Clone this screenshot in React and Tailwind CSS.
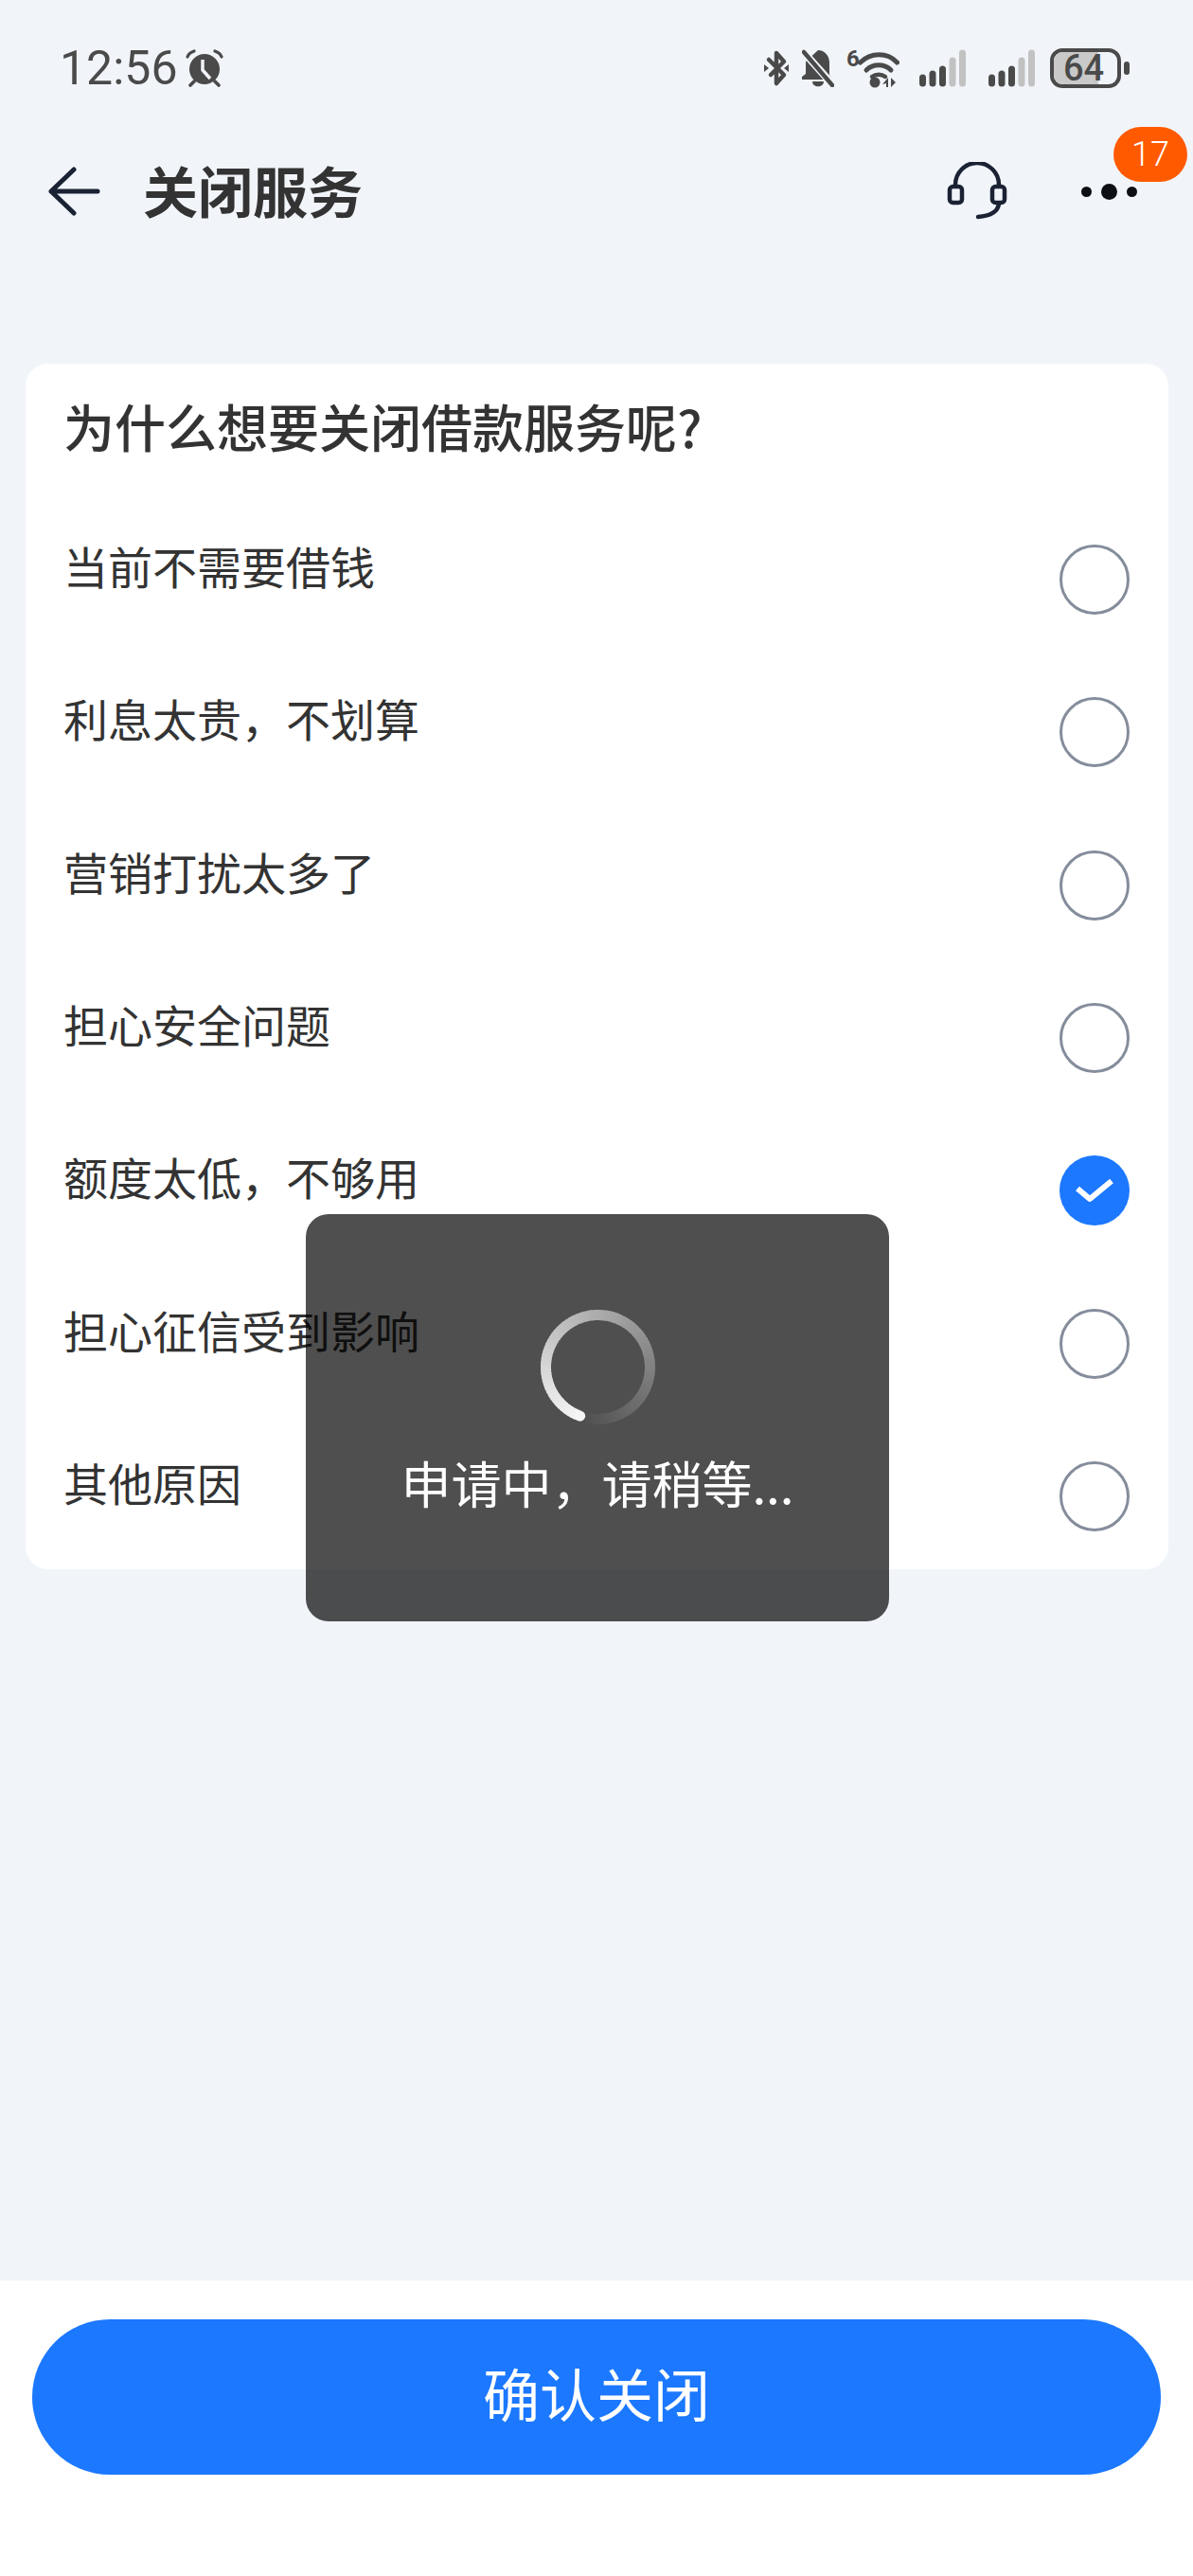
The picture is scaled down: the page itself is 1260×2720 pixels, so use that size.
const cjk = { fontFamily: '"Noto Sans CJK SC", "Noto Sans", sans-serif' };
const reasons = ['当前不需要借钱', '利息太贵，不划算', '营销打扰太多了', '担心安全问题', '额度太低，不够用', '担心征信受到影响', '其他原因'];
const selected = 4;

function AlarmIcon() {
  return (
    <svg width="40" height="40" viewBox="0 0 40 40" fill="none" className="ml-[8px]">
      <circle cx="20" cy="21" r="16" fill="#4a4a4a" />
      <path d="M18 11v11l8 9" stroke="#f1f5fa" strokeWidth="3.5" strokeLinejoin="round" />
      <path d="M2 8c1-3 4-5 7-6M38 8c-1-3-4-5-7-6" stroke="#4a4a4a" strokeWidth="3.2" strokeLinecap="round" />
      <path d="M9 34l-4 4M31 34l4 4" stroke="#4a4a4a" strokeWidth="3.6" strokeLinecap="round" />
    </svg>
  );
}

function BluetoothIcon() {
  return (
    <svg width="28" height="40" viewBox="0 0 28 40" fill="none">
      <path d="M14 36V4l8 9L8 27M14 36l8-9L6 11" stroke="#4a4a4a" strokeWidth="4.5" strokeLinejoin="round" strokeLinecap="round" />
      <path d="M1 16l5 4-5 4zM27 16l-5 4 5 4z" fill="#4a4a4a" />
    </svg>
  );
}

function BellOffIcon() {
  return (
    <svg width="34" height="40" viewBox="0 0 34 40" fill="none">
      <path d="M17 1c7 0 12 6 12 13v13l3 5H0v-3l4-3V13L17 1z" fill="#4a4a4a" />
      <path d="M11 34c0 7 12 7 12 0z" fill="#4a4a4a" />
      <path d="M-1 0l34 38" stroke="#f1f5fa" strokeWidth="8" />
      <path d="M2 3l30 35" stroke="#4a4a4a" strokeWidth="4.5" strokeLinecap="round" />
    </svg>
  );
}

function WifiIcon() {
  return (
    <div className="flex items-start">
      <span className="text-[24px] font-bold leading-[20px] text-[#4a4a4a] w-[12px]" style={{ fontFamily: 'Roboto, sans-serif' }}>6</span>
      <svg width="44" height="41" viewBox="0 0 44 41" fill="none">
        <path d="M2.5 14c11-11 29-11 39 0" stroke="#4a4a4a" strokeWidth="5" strokeLinecap="round" />
        <path d="M9 22c7-7 19-7 26 0" stroke="#4a4a4a" strokeWidth="5" strokeLinecap="round" />
        <path d="M15 29c4-3 10-3 14 0" stroke="#4a4a4a" strokeWidth="4.5" strokeLinecap="round" />
        <circle cx="18" cy="35" r="5.5" fill="#4a4a4a" />
        <path d="M32 30v10h-2v-4l-4 1zM35 30l5 5-5 5z" fill="#4a4a4a" />
      </svg>
    </div>
  );
}

function SignalIcon() {
  const bars = [
    { x: 0, h: 13, c: '#4a4a4a' },
    { x: 10.5, h: 17, c: '#4a4a4a' },
    { x: 21, h: 22, c: '#4a4a4a' },
    { x: 31.5, h: 31, c: '#c2c2c2' },
    { x: 42, h: 39, c: '#c2c2c2' },
  ];
  return (
    <svg width="49" height="40" viewBox="0 0 49 40">
      {bars.map((b) => (
        <rect key={b.x} x={b.x} y={39.5 - b.h} width="7" height={b.h} rx="3.5" fill={b.c} />
      ))}
    </svg>
  );
}

function Battery() {
  return (
    <div className="flex items-center ml-[16px]">
      <div className="relative w-[75px] h-[42px] rounded-[13px] border-[4px] border-[#4a4a4a] flex items-center justify-center">
        <div className="absolute left-0 top-0 bottom-0 w-[47px] rounded-l-[9px] bg-[#c9c9c9]" />
        <span className="relative text-[38px] font-medium leading-[34px] text-[#4a4a4a] pr-[4px]" style={{ fontFamily: 'Roboto, sans-serif' }}>64</span>
      </div>
      <div className="ml-[3px] w-[6px] h-[14px] rounded-full bg-[#4a4a4a]" />
    </div>
  );
}

function StatusBar() {
  return (
    <div className="h-[134px] pt-[51px] pl-[63px] pr-[67px] flex items-start justify-between">
      <div className="flex items-center h-[42px]">
        <span className="text-[50px] leading-none text-[#4a4a4a]" style={{ fontFamily: 'Roboto, sans-serif' }}>12:56</span>
        <AlarmIcon />
      </div>
      <div className="flex items-center h-[42px]">
        <BluetoothIcon />
        <div className="w-[13px]" />
        <BellOffIcon />
        <div className="w-[13px]" />
        <WifiIcon />
        <div className="w-[21px]" />
        <SignalIcon />
        <div className="w-[24px]" />
        <SignalIcon />
        <Battery />
      </div>
    </div>
  );
}

function Header() {
  return (
    <div className="relative h-[136px] flex items-center pl-[50px] pr-[59px]">
      <svg width="56" height="52" viewBox="0 0 56 52" fill="none">
        <path d="M28 3L4 26l24 23M4 26h49" stroke="#1a2233" strokeWidth="5" strokeLinecap="round" strokeLinejoin="round" />
      </svg>
      <h1 className="ml-[45px] mb-[5px] text-[58px] font-bold leading-none text-[#333333]" style={cjk}>关闭服务</h1>
      <div className="ml-auto flex items-center">
        <svg width="64" height="62" viewBox="0 0 64 62" fill="none">
          <path d="M9 26v-2a23 23 0 0 1 46 0v2" stroke="#1a2233" strokeWidth="4.5" />
          <rect x="3" y="26" width="13" height="17" rx="3.5" stroke="#1a2233" strokeWidth="4.5" />
          <rect x="48" y="26" width="13" height="17" rx="3.5" stroke="#1a2233" strokeWidth="4.5" />
          <path d="M55 44c-1 8-8 13-22 14" stroke="#1a2233" strokeWidth="4.5" strokeLinecap="round" />
        </svg>
        <div className="ml-[78px] flex items-center gap-[10px]">
          <div className="w-[11px] h-[11px] rounded-full bg-[#0d0f14]" />
          <div className="w-[17px] h-[17px] rounded-full bg-[#0d0f14]" />
          <div className="w-[11px] h-[11px] rounded-full bg-[#0d0f14]" />
        </div>
      </div>
      <div className="absolute left-[1176px] top-0 w-[78px] h-[58px] rounded-full bg-[#ff5a00] flex items-center justify-center text-white text-[36px] leading-none" style={{ fontFamily: 'Roboto, sans-serif', fontWeight: 300 }}>17</div>
    </div>
  );
}

function Radio({ checked }) {
  if (checked) {
    return (
      <div className="w-[74px] h-[74px] rounded-full bg-[#1b78ff] flex items-center justify-center shrink-0">
        <svg width="42" height="26" viewBox="0 0 42 26" fill="none">
          <path d="M3 11l13 11L39 3" stroke="#ffffff" strokeWidth="6" strokeLinejoin="round" />
        </svg>
      </div>
    );
  }
  return <div className="w-[74px] h-[74px] rounded-full border-[3px] border-[#858d9c] shrink-0" />;
}

function Spinner() {
  // ring fades clockwise from the white head at the lower left, opaque greys so segments overlap cleanly
  const count = 90;
  const start = 200;
  const segs = Array.from({ length: count }, (_, i) => {
    const a0 = ((start + (i / count) * 352) * Math.PI) / 180;
    const a1 = ((start + ((i + 1.3) / count) * 352) * Math.PI) / 180;
    const p = (a) => `${60.5 + 55 * Math.sin(a)} ${60.5 - 55 * Math.cos(a)}`;
    const g = Math.round(245 - (i / count) * 165);
    return <path key={i} d={`M${p(a0)}A55 55 0 0 1 ${p(a1)}`} stroke={`rgb(${g},${g},${g})`} strokeWidth="11" />;
  }).reverse();
  return (
    <svg width="121" height="121" viewBox="0 0 121 121" fill="none">
      {segs}
      <circle cx={60.5 + 55 * Math.sin((start * Math.PI) / 180)} cy={60.5 - 55 * Math.cos((start * Math.PI) / 180)} r="5.5" fill="#f5f5f5" />
    </svg>
  );
}

export default function App() {
  return (
    <div className="relative w-[1260px] h-[2720px] bg-[#f1f5fa] flex flex-col overflow-hidden" style={cjk}>
      <StatusBar />
      <Header />
      <div className="mt-[114px] ml-[27px] mr-[26px] rounded-[24px] bg-white pl-[40px] pr-[41px] pb-[6px]">
        <div className="h-[138px] flex items-center pb-[6px] text-[54px] font-medium leading-none text-[#333333]">为什么想要关闭借款服务呢?</div>
        {reasons.map((r, i) => (
          <div key={r} className="h-[161.33px] flex items-start justify-between">
            <span className="mt-[45px] text-[47px] leading-[60px] text-[#333333]">{r}</span>
            <div className="mt-[53px]">
              <Radio checked={i === selected} />
            </div>
          </div>
        ))}
      </div>
      <div className="mt-auto h-[312px] bg-white px-[34px] pt-[41px]">
        <button className="w-full h-[164px] rounded-full bg-[#1b78ff] text-white text-[60px] leading-none pb-[11px]">确认关闭</button>
      </div>

      <div className="absolute left-[323px] top-[1282px] w-[616px] h-[430px] rounded-[24px] bg-black/[0.69] flex flex-col items-center">
        <div className="mt-[101px]">
          <Spinner />
        </div>
        <div className="mt-[26px] text-[53px] leading-[70px] text-white">申请中，请稍等...</div>
      </div>
    </div>
  );
}
